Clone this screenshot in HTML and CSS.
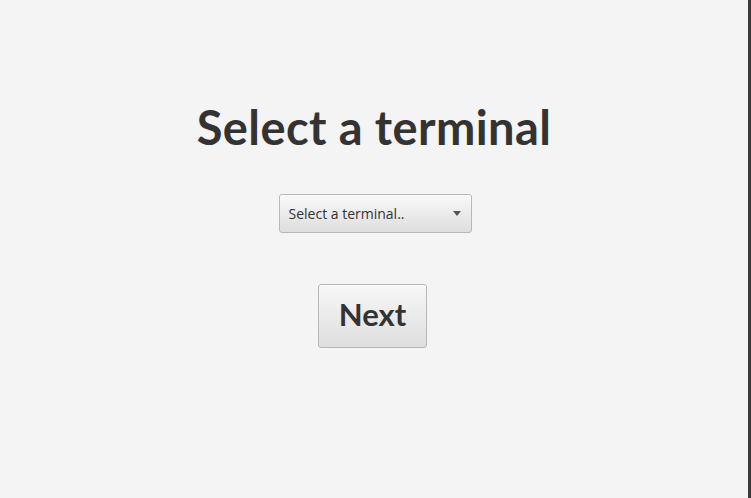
FILE: index.html
```html
<!DOCTYPE html>
<html>
<head>
<meta charset="utf-8">
<link rel="stylesheet" href="styles.css">
</head>
<body>
<div class="window">
  <main class="content">
    <h1 class="title">Select a terminal</h1>
    <div class="combo">
      <span class="combo-text">Select a terminal..</span>
      <span class="combo-arrow"></span>
    </div>
    <button class="next">Next</button>
  </main>
  <div class="edge"></div>
</div>
</body>
</html>
```
FILE: styles.css
```css
html, body {
  margin: 0;
  padding: 0;
  background: #f4f4f4;
}
.window {
  display: flex;
  width: 751px;
  height: 498px;
  overflow: hidden;
}
.content {
  flex: 1;
  display: flex;
  flex-direction: column;
  align-items: center;
  padding-top: 100px;
  font-family: "Lato", "Open Sans", sans-serif;
  color: #333333;
}
.edge {
  width: 3px;
  background: #3a3a3a;
}
.title {
  margin: 0;
  font-size: 47px;
  line-height: 55px;
  font-weight: 700;
  letter-spacing: 0.4px;
}
.combo {
  margin-top: 39px;
  margin-left: 2px;
  width: 193px;
  height: 39px;
  box-sizing: border-box;
  border: 1px solid #b8b8b8;
  border-radius: 3px;
  background: linear-gradient(#f9f9f9, #dedede);
  box-shadow: inset 0 1px 0 #ffffff;
  display: flex;
  align-items: center;
  justify-content: space-between;
  padding: 0 10px 0 9px;
}
.combo-text {
  font-family: "Open Sans", sans-serif;
  font-size: 14px;
  color: #333;
}
.combo-arrow {
  width: 0;
  height: 0;
  border-left: 4.5px solid transparent;
  border-right: 4.5px solid transparent;
  border-top: 5px solid #555;
}
.next {
  margin-top: 51px;
  margin-right: 3px;
  width: 109px;
  height: 64px;
  border: 1px solid #b8b8b8;
  border-radius: 3px;
  background: linear-gradient(#f7f7f7, #dedede);
  box-shadow: inset 0 1px 0 #ffffff;
  font-family: "Lato", "Open Sans", sans-serif;
  font-weight: 700;
  font-size: 31px;
  line-height: 1;
  color: #333;
  padding: 0 0 3px 0;
}
```
